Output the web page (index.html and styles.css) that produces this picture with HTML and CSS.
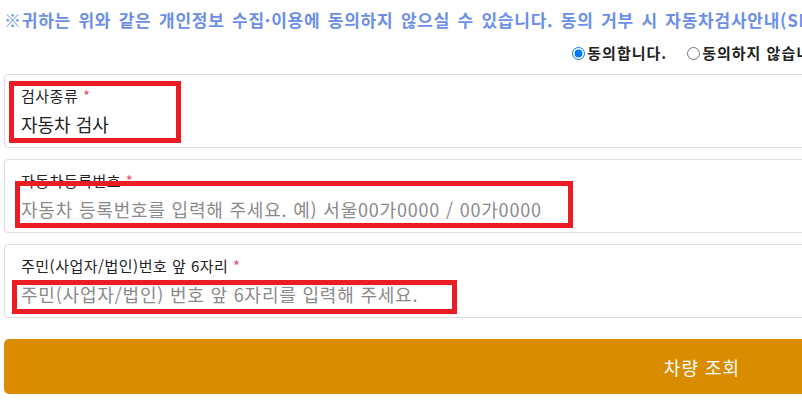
FILE: index.html
```html
<!DOCTYPE html>
<html lang="ko">
<head>
  <meta charset="UTF-8" />
  <meta name="viewport" content="width=device-width, initial-scale=1" />
  <title>자동차 검사 조회</title>
  <link rel="stylesheet" href="styles.css">
</head>
<body>

<div class="wrap">
  <p class="notice">※귀하는 위와 같은 개인정보 수집·이용에 동의하지 않으실 수 있습니다. 동의 거부 시 자동차검사안내(SMS) 서비스를 이용하실 수 없습니다.</p>

  <div class="agree">
    <label><input type="radio" name="agree" checked /> 동의합니다.</label>
    <label><input type="radio" name="agree" /> 동의하지 않습니다.</label>
  </div>

  <form class="form">
    <div class="field">
      <span class="label">검사종류 <em>*</em></span>
      <div class="value">자동차 검사</div>
      <div class="mark mark-1"></div>
    </div>

    <div class="field">
      <label class="label" for="carNo">자동차등록번호 <em>*</em></label>
      <input type="text" id="carNo" placeholder="자동차 등록번호를 입력해 주세요. 예) 서울00가0000 / 00가0000" />
      <div class="mark mark-2"></div>
    </div>

    <div class="field">
      <label class="label" for="birth">주민(사업자/법인)번호 앞 6자리 <em>*</em></label>
      <input type="text" id="birth" maxlength="6" placeholder="주민(사업자/법인) 번호 앞 6자리를 입력해 주세요." />
      <div class="mark mark-3"></div>
    </div>

    <button type="button" class="boton">차량 조회</button>
  </form>
</div>

</body>
</html>
```

FILE: styles.css
```css
* { box-sizing: border-box; }
html, body { overflow: hidden; }
body {
  font-family: "Noto Sans CJK KR", "Noto Sans", sans-serif;
  margin: 0;
  background: white;
  color: #222;
}
.wrap {
  width: 1404px;
  padding: 0 4px;
}
.notice {
  margin: 9px 0 0;
  font-size: 17px;
  line-height: 22px;
  font-weight: bold;
  letter-spacing: 0.75px;
  word-spacing: 2px;
  color: #6b8fe8;
  white-space: nowrap;
}
.agree {
  display: flex;
  justify-content: center;
  gap: 20px;
  margin-top: 11px;
  height: 22px;
  font-size: 15px;
  font-weight: bold;
  line-height: 22px;
  letter-spacing: 1px;
}
.agree label {
  display: flex;
  align-items: center;
  gap: 2px;
}
.agree input {
  margin: 0;
  width: 13px;
  height: 13px;
}
.form {
  display: flex;
  flex-direction: column;
  gap: 11px;
  margin-top: 10px;
}
.field {
  position: relative;
  display: flex;
  flex-direction: column;
  gap: 5px;
  height: 74px;
  padding: 12px 16px 0;
  border: 1px solid #ddd;
  border-radius: 4px;
}
.label {
  font-size: 15px;
  line-height: 18px;
  letter-spacing: 0.5px;
}
.label em {
  color: #e8506a;
  font-style: normal;
}
.value, .field input {
  font-family: inherit;
  font-size: 18px;
  line-height: 28px;
  color: #222;
}
.field input {
  border: none;
  padding: 0;
  outline: none;
  width: 100%;
  letter-spacing: 0.8px;
}
.field input::placeholder { color: #8a8a8a; }
.mark {
  position: absolute;
  border: 5px solid #ec1c24;
}
.mark-1 { left: 4px; top: 6px; width: 172px; height: 62px; }
.mark-2 { left: 10px; top: 21px; width: 558px; height: 47px; }
.mark-3 { left: 7px; top: 35px; width: 445px; height: 34px; }
.boton {
  margin-top: 10px;
  height: 55px;
  background-color: #d98c00;
  color: white;
  border: none;
  border-radius: 5px;
  font-family: inherit;
  font-size: 18px;
  letter-spacing: 1px;
}
```
